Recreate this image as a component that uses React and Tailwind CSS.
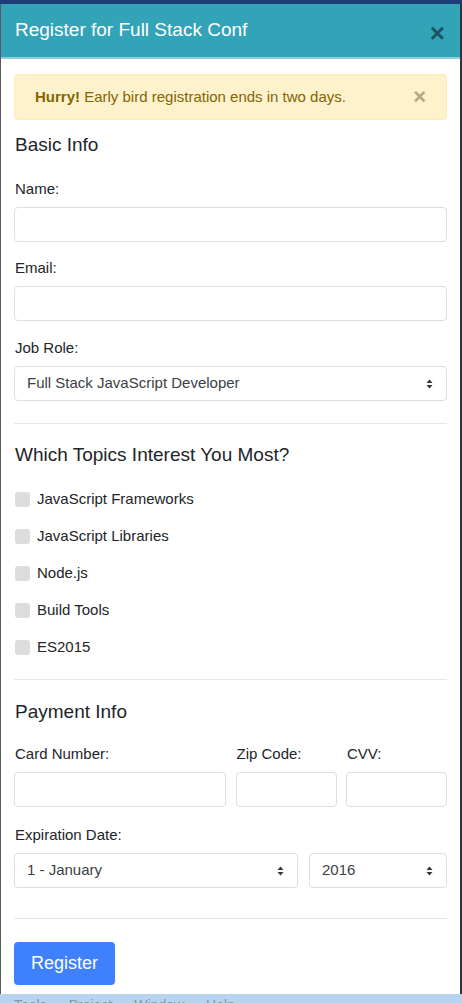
const font = { fontFamily: '"Liberation Sans", Arial, sans-serif' };

function Arrows() {
  return (
    <svg width="7" height="10" viewBox="0 0 7 10" className="shrink-0">
      <path d="M3.5 0.5 L6.5 4 L0.5 4 Z" fill="#333" />
      <path d="M3.5 9.5 L6.5 6 L0.5 6 Z" fill="#333" />
    </svg>
  );
}

function Label({ children, className = '' }) {
  return <div className={`h-[20px] leading-[20px] text-[15px] text-[#212529] mb-[8px] ${className}`}>{children}</div>;
}

function Input() {
  return <div className="h-[35px] rounded-[4px] border border-[#dedede] bg-white" />;
}

function Select({ value }) {
  return (
    <div className="h-[35px] rounded-[4px] border border-[#dedede] bg-white flex items-center justify-between pl-[12px] pr-[13px]">
      <span className="text-[15px] text-[#3b3f44]">{value}</span>
      <Arrows />
    </div>
  );
}

function Heading({ children, className = '' }) {
  return <h3 className={`h-[24px] leading-[24px] text-[19px] text-[#212529] ${className}`}>{children}</h3>;
}

const topics = ['JavaScript Frameworks', 'JavaScript Libraries', 'Node.js', 'Build Tools', 'ES2015'];

export default function App() {
  return (
    <div className="w-[462px] h-[1003px] overflow-hidden flex flex-col bg-[#1f3b78]" style={font}>
      <div className="h-[4px] shrink-0" />
      <div className="flex-1 flex flex-col bg-white border-l border-[#5c5c5c] border-r-2 border-r-[#2c3440]">
        {/* header */}
        <div className="h-[53px] bg-[#33a3b8] flex items-center justify-between pl-[14px] pr-[15px]">
          <h2 className="text-[19px] text-white">Register for Full Stack Conf</h2>
          <span className="text-[26px] font-bold leading-none text-[#1c5360] mt-[4px]">×</span>
        </div>
        <div className="h-[2px] bg-[#8fcfdc]" />

        <div className="px-[13px]">
          {/* alert */}
          <div className="mt-[15px] h-[46px] rounded-[4px] bg-[#fdf2cc] border border-[#fbecb9] flex items-center justify-between pl-[20px] pr-[20px]">
            <p className="text-[15px] text-[#856404]">
              <b>Hurry!</b> Early bird registration ends in two days.
            </p>
            <span className="text-[22px] font-bold leading-none text-[#b8a67c]">×</span>
          </div>

          {/* basic info */}
          <Heading className="mt-[13px] mb-[22px] pl-px">Basic Info</Heading>
          <Label className="pl-px">Name:</Label>
          <Input />
          <Label className="mt-[16px] pl-px">Email:</Label>
          <Input />
          <Label className="mt-[17px] pl-px">Job Role:</Label>
          <Select value="Full Stack JavaScript Developer" />

          <div className="mt-[22px] h-px bg-[#e6e6e6]" />

          {/* topics */}
          <Heading className="mt-[19px] mb-[14px] pl-px">Which Topics Interest You Most?</Heading>
          {topics.map(t => (
            <div key={t} className="h-[37px] flex items-center gap-[7px] pl-px">
              <span className="w-[15px] h-[15px] rounded-[3px] bg-[#dddddd]" />
              <span className="text-[15px] text-[#212529]">{t}</span>
            </div>
          ))}

          <div className="mt-[13px] h-px bg-[#e6e6e6]" />

          {/* payment */}
          <Heading className="mt-[20px] mb-[20px] pl-px">Payment Info</Heading>
          <div className="grid grid-cols-[212px_101px_101px] justify-between">
            <div>
              <Label className="pl-px">Card Number:</Label>
              <Input />
            </div>
            <div>
              <Label className="pl-px">Zip Code:</Label>
              <Input />
            </div>
            <div>
              <Label className="pl-px">CVV:</Label>
              <Input />
            </div>
          </div>
          <Label className="mt-[18px] pl-px">Expiration Date:</Label>
          <div className="grid grid-cols-[284px_138px] justify-between">
            <Select value="1 - January" />
            <Select value="2016" />
          </div>

          <div className="mt-[30px] h-px bg-[#e6e6e6]" />

          <button className="mt-[23px] w-[101px] h-[43px] rounded-[4px] bg-[#3f80fd] text-white text-[18px]">
            Register
          </button>
        </div>
      </div>
      {/* menu strip of the window behind, mostly hidden */}
      <div className="h-[9px] shrink-0 bg-[#b7d3ee] overflow-hidden">
        <div className="flex gap-[22px] pl-[14px] pt-[4px] text-[14px] leading-none text-[#8a96a3]">
          <span>Tools</span>
          <span>Project</span>
          <span>Window</span>
          <span>Help</span>
        </div>
      </div>
    </div>
  );
}
